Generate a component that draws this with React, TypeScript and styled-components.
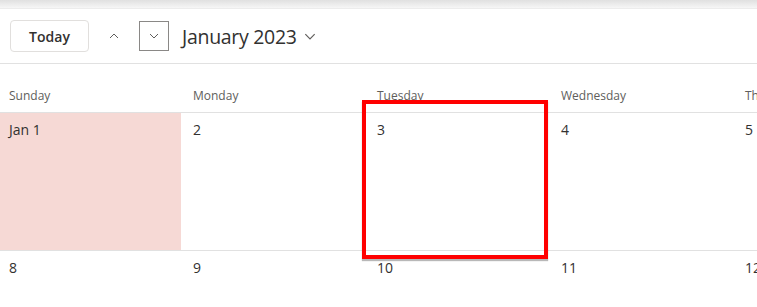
import React from "react";
import styled, { createGlobalStyle } from "styled-components";

const GlobalStyle = createGlobalStyle`
  html, body {
    margin: 0;
    padding: 0;
    background: #ffffff;
  }
  body {
    font-family: "Segoe UI", "Open Sans", "Noto Sans", sans-serif;
    color: #323130;
  }
`;

const Page = styled.div`
  position: relative;
  width: 757px;
  height: 307px;
  overflow: hidden;
  background: #fff;
`;

const TopStrip = styled.div`
  height: 8px;
  background: linear-gradient(#e0e0e0, #f6f6f6);
  border-bottom: 1px solid #ececec;
`;

const Toolbar = styled.div`
  display: flex;
  align-items: center;
  height: 54px;
  padding-left: 10px;
  border-bottom: 1px solid #e1e1e1;
`;

const TodayButton = styled.button`
  width: 79px;
  height: 32px;
  margin-right: 10px;
  border: 1px solid #e1dfdd;
  border-radius: 4px;
  background: #fff;
  font-family: inherit;
  font-size: 14px;
  font-weight: 600;
  color: #323130;
`;

const NavButton = styled.button<{ $boxed?: boolean }>`
  display: flex;
  align-items: center;
  justify-content: center;
  width: 30px;
  height: 30px;
  margin-right: 10px;
  padding: 0;
  background: #fff;
  border: 1px solid ${(p) => (p.$boxed ? "#8a8886" : "transparent")};
  border-radius: 0;
`;

const MonthTitle = styled.div`
  display: flex;
  align-items: center;
  gap: 7px;
  margin-left: 3px;
  font-size: 19.5px;
  font-weight: 400;
  color: #323130;
  letter-spacing: -0.3px;
`;

const Grid = styled.div`
  display: grid;
  grid-template-columns: repeat(7, 184px);
  margin-left: -3px;
`;

const DayName = styled.div`
  height: 49px;
  box-sizing: border-box;
  padding: 22px 0 6px 12px;
  font-size: 12px;
  line-height: 20px;
  color: #605e5c;
  white-space: nowrap;
  border-bottom: 1px solid #e1e1e1;
`;

const DayCell = styled.div<{ $today?: boolean; $tall?: boolean }>`
  height: ${(p) => (p.$tall ? "138px" : "80px")};
  box-sizing: border-box;
  padding: 7px 0 0 12px;
  font-size: 14px;
  line-height: 20px;
  color: #323130;
  background: ${(p) => (p.$today ? "#f6d9d5" : "#fff")};
  border-bottom: ${(p) => (p.$tall ? "1px solid #e1e1e1" : "none")};
`;

const Highlight = styled.div`
  position: absolute;
  left: 362px;
  top: 100px;
  width: 186px;
  height: 159px;
  box-sizing: border-box;
  border: 4px solid #ff0000;
  box-shadow: 0 2px 1px rgba(0, 0, 0, 0.28);
  pointer-events: none;
`;

const Chevron = ({ up, size = 10 }: { up?: boolean; size?: number }) => (
  <svg width={size} height={size / 2 + 1} viewBox="0 0 10 6" fill="none">
    <polyline
      points={up ? "1,5 5,1 9,5" : "1,1 5,5 9,1"}
      stroke="#605e5c"
      strokeWidth="1"
    />
  </svg>
);

const days = ["Sunday", "Monday", "Tuesday", "Wednesday", "Thursday", "Friday", "Saturday"];
const week1 = ["Jan 1", "2", "3", "4", "5", "6", "7"];
const week2 = ["8", "9", "10", "11", "12", "13", "14"];

export default function App() {
  return (
    <Page>
      <GlobalStyle />
      <TopStrip />
      <Toolbar>
        <TodayButton>Today</TodayButton>
        <NavButton>
          <Chevron up />
        </NavButton>
        <NavButton $boxed>
          <Chevron />
        </NavButton>
        <MonthTitle>
          January 2023
          <Chevron size={12} />
        </MonthTitle>
      </Toolbar>
      <Grid>
        {days.map((d) => (
          <DayName key={d}>{d}</DayName>
        ))}
        {week1.map((d, i) => (
          <DayCell key={d} $tall $today={i === 0}>
            {d}
          </DayCell>
        ))}
        {week2.map((d) => (
          <DayCell key={d}>{d}</DayCell>
        ))}
      </Grid>
      <Highlight />
    </Page>
  );
}
